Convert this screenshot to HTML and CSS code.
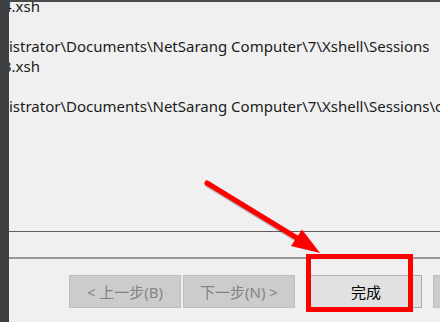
FILE: index.html
```html
<!DOCTYPE html>
<html lang="zh-CN">
<head>
    <meta charset="UTF-8">
    <meta name="viewport" content="width=device-width, initial-scale=1.0">
    <title>会话导入向导</title>
    <link rel="stylesheet" href="styles.css">
</head>
<body>

<div class="screen">
    <!-- 背后窗口露出的一条 -->
    <div class="backdrop"></div>

    <div class="wizard">
        <!-- 导入结果日志 -->
        <div class="log">
            <p class="line cut-digit">4.xsh</p>
            <p class="line">&nbsp;</p>
            <p class="line">istrator\Documents\NetSarang Computer\7\Xshell\Sessions</p>
            <p class="line cut-digit">3.xsh</p>
            <p class="line">&nbsp;</p>
            <p class="line">istrator\Documents\NetSarang Computer\7\Xshell\Sessions\c</p>
        </div>

        <div class="rule-dark"></div>
        <div class="blank"></div>
        <div class="rule-light"></div>

        <!-- 向导按钮 -->
        <div class="buttons">
            <button class="btn btn-back" disabled>&lt; 上一步(B)</button>
            <button class="btn btn-next" disabled>下一步(N) &gt;</button>
            <button class="btn btn-finish">完成</button>
            <button class="btn btn-cancel" disabled>取消</button>
        </div>
    </div>

    <!-- 标注：红色箭头和方框 -->
    <svg class="callout" width="440" height="322" viewBox="0 0 440 322">
        <line x1="207" y1="184.5" x2="297" y2="239.5" stroke="rgba(0,0,0,0.25)" stroke-width="5" stroke-linecap="round"/>
        <line x1="207" y1="183" x2="297" y2="238" stroke="#ff0000" stroke-width="5" stroke-linecap="round"/>
        <polygon points="320,253 302,229.5 291,246" fill="#ff0000"/>
        <rect x="308.5" y="256.5" width="102" height="53" fill="none" stroke="#ff0000" stroke-width="5"/>
    </svg>
</div>

</body>
</html>
```

FILE: styles.css
```css
/* 整体 */
body {
    margin: 0;
    font-family: "Noto Sans", "Noto Sans CJK SC", sans-serif;
    background-color: #3f3f3f;
}

.screen {
    position: relative;
    display: flex;
    width: 440px;
    height: 322px;
    overflow: hidden;
}

.backdrop {
    width: 9px;
    flex-shrink: 0;
    background-color: #3f3f3f;
}

.wizard {
    flex: 1;
    display: flex;
    flex-direction: column;
    background-color: #f0f0f0;
    border-top: 2px solid #4a4a4a;
    min-width: 0;
}

/* 日志区域 */
.log {
    height: 229px;
    overflow: hidden;
    flex-shrink: 0;
}

.line {
    margin: 0;
    font-size: 15px;
    line-height: 20px;
    color: #1b1b1b;
    white-space: nowrap;
}

.line:first-child {
    margin-top: -6px;
}

.cut-digit {
    margin-left: -6px;
}

.rule-dark {
    height: 1px;
    background-color: #5e5e5e;
    flex-shrink: 0;
}

.blank {
    height: 25px;
    flex-shrink: 0;
}

.rule-light {
    height: 2px;
    background-color: #9a9a9a;
    flex-shrink: 0;
}

/* 按钮 */
.buttons {
    display: flex;
    padding: 16px 0 0 60px;
    white-space: nowrap;
}

.btn {
    flex-shrink: 0;
    width: 112px;
    height: 33px;
    box-sizing: border-box;
    padding: 0;
    font-family: "Noto Sans", "Noto Sans CJK SC", sans-serif;
    font-size: 15px;
    border: 1px solid #bfbfbf;
    background-color: #cccccc;
    color: #838383;
}

.btn-next {
    margin-left: 2px;
}

.btn-finish {
    margin-left: 15px;
    background-color: #e1e1e1;
    border-color: #adadad;
    color: #000;
}

.btn-cancel {
    margin-left: 11px;
}

.callout {
    position: absolute;
    left: 0;
    top: 0;
}
```
